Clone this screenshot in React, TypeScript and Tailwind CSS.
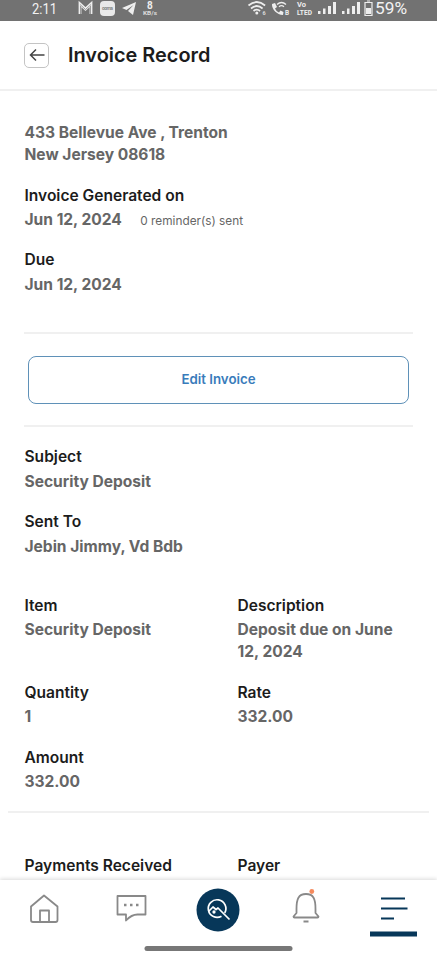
import React from 'react';

type FieldProps = {
  label: string;
  value?: React.ReactNode;
  className?: string;
};

const Field = ({ label, value, className = '' }: FieldProps) => (
  <div className={className}>
    <h2 className="text-[15.55px] leading-[22px] font-semibold text-[#1c1c1c]">{label}</h2>
    {value && (
      <div className="mt-[2.5px] text-[15.55px] leading-[22px] font-bold text-[#666666]">{value}</div>
    )}
  </div>
);

const StatusBar = () => (
  <div className="h-[21px] shrink-0 overflow-hidden bg-[#727272] text-white">
    <svg width="437" height="21" viewBox="0 0 437 21" fill="none" fontFamily="Roboto, sans-serif">
      <text x="32" y="14" fontSize="15.500" fill="#f2f2f2" textLength="25" lengthAdjust="spacingAndGlyphs">2:11</text>
      {/* Mail */}
      <path d="M80 14V4l5.500 5L91 4v10" stroke="#eee" strokeWidth="2.800" />
      <path d="M80 4.500l5.500 5 5.500-5M80.500 14V6M90.500 14V6" stroke="#777" strokeWidth=".7" />
      {/* App badge */}
      <rect x="100" y="1" width="15" height="15" rx="4" fill="#e9e9e9" />
      <text x="102" y="10" fontSize="5" fontWeight="700" fill="#888" textLength="11">ooma</text>
      {/* Telegram */}
      <path d="M136 2l-14 6 4.500 2 7-5-5.500 6 5 4z" fill="#eee" />
      <text x="147" y="8.500" fontSize="10" fontWeight="700" fill="#eee">8</text>
      <text x="143" y="15" fontSize="5.500" fontWeight="700" fill="#ddd" textLength="14" lengthAdjust="spacingAndGlyphs">KB/s</text>
      {/* Wifi */}
      <g stroke="#eee" strokeWidth="1.700">
        <path d="M248.500 5.500q8.300-7 16.600 0M251 8.500q5.800-5 11.600 0M253.500 11q3.300-2.800 6.600 0" />
      </g>
      <circle cx="256.800" cy="13" r="1.500" fill="#eee" />
      <text x="262.500" y="14.500" fontSize="5.500" fontWeight="700" fill="#ddd">6</text>
      {/* Wifi calling */}
      <path d="M272 4l3-1 2 4-2 1.500c1 2 2 3 4 4l1.500-2 3 1.500-.5 3C277 15 271.500 9 272 4z" fill="#eee" />
      <path d="M277 4.500q4.500-4 9 0M279 6.700q2.500-2 5 0" stroke="#eee" strokeWidth="1.300" />
      <text x="285" y="15" fontSize="6.500" fontWeight="700" fill="#eee">B</text>
      <text x="297" y="7" fontSize="7.500" fontWeight="700" fill="#eee" textLength="9">Vo</text>
      <text x="297" y="14.500" fontSize="7" fontWeight="700" fill="#eee" textLength="15" lengthAdjust="spacingAndGlyphs">LTED</text>
      {/* Signal */}
      <g fill="#eee">
        <path d="M318 11h2.500v3H318zM323 8.500h2.500V14H323zM328 6h3v8h-3zM333 2h3v12h-3z" />
        <path d="M342 11h2.500v3H342zM347 8.500h2.500V14H347zM352 6h3v8h-3zM357 2h3v12h-3z" />
      </g>
      {/* Battery */}
      <path d="M365 2.500h7v13h-7zM367 1h3" stroke="#eee" strokeWidth="1.200" />
      <path d="M366 8h5v6h-5z" fill="#eee" />
      <text x="375" y="14" fontSize="16" fill="#f2f2f2" textLength="32" lengthAdjust="spacingAndGlyphs">59%</text>
    </svg>
  </div>
);

const BottomNav = () => (
  <nav className="relative h-20 shrink-0 bg-white shadow-[0_-1px_4px_rgba(0,0,0,0.15)]">
    <svg width="437" height="80" viewBox="0 880 437 80" fill="none" stroke="#898989" strokeWidth="1.800" strokeLinejoin="round">
      {/* Home */}
      <path d="M31 906.500L44 895.500l13.500 11V920q0 2-2 2H33q-2 0-2-2zM40 922v-11.500h9V922" />
      {/* Messages */}
      <path d="M117.500 896h28v18.500h-8q-6 0-11.500 6v-6h-8.500z" />
      <path d="M124 905h2.500M130 905h2.500M136 905h2.500" strokeWidth="2.400" />
      {/* Search */}
      <circle cx="218" cy="910" r="21.500" fill="#073759" stroke="none" />
      <g stroke="white" strokeWidth="1.700">
        <path d="M221.500 916.200a8.800 8.800 0 1 1 3.200-3.200" />
        <path d="M208.500 911.500l4.500-4.500 3 2.500 2-1.500 11.500 11.500" />
        <circle cx="214" cy="912" r=".8" />
      </g>
      {/* Notifications */}
      <path d="M296.500 909c0-10 2-15 9.500-15s9.500 5 9.500 15v4l3 3.500q0 1-1 1h-23q-1 0-1-1l3-3.500zM303.500 921.500h5" />
      <circle cx="311.800" cy="891.500" r="2.400" fill="#f58a5d" stroke="none" />
      {/* Menu */}
      <path d="M381 898.500h24M381 908.500h26.500M381 918.500h13" stroke="#073759" strokeWidth="2.200" />
      <path d="M370 934h47" stroke="#073759" strokeWidth="5" />
      <path d="M147 948.500h143" stroke="#777" strokeWidth="5" strokeLinecap="round" />
    </svg>
  </nav>
);

const App = () => {
  return (
    <div className="flex h-[960px] w-[437px] flex-col overflow-hidden bg-white font-['Inter',sans-serif]">
      <StatusBar />
      <header className="flex h-[70px] shrink-0 items-center border-b-2 border-[#f0f0f0] px-6">
        <button aria-label="Back" className="flex size-[25px] items-center justify-center rounded-[5px] border border-[#c4c4c4]">
          <svg width="16" height="14" viewBox="0 0 16 14" fill="none" stroke="#444" strokeWidth="1.500">
            <path d="M15.500 7H1.500M7 1.500L1.500 7 7 12.500" />
          </svg>
        </button>
        <h1 className="ml-[19px] text-[19.9px] leading-7 font-semibold text-[#1c1c1c]">Invoice Record</h1>
      </header>
      <main className="min-h-0 flex-1 overflow-hidden">
        <section className="px-[24.5px] pt-[31px]">
          <p className="text-[15.55px] leading-[22px] font-bold text-[#666666]">
            433 Bellevue Ave , Trenton
            <br />
            New Jersey 08618
          </p>
          <Field
            className="mt-[18.5px]"
            label="Invoice Generated on"
            value={
              <span className="flex h-[22px] items-center">
                Jun 12, 2024
                <span className="ml-[18.5px] pt-0.5 text-[11.8px] font-normal">0 reminder(s) sent</span>
              </span>
            }
          />
          <Field className="mt-[18px]" label="Due" value="Jun 12, 2024" />
        </section>

        <section className="mx-6 mt-[36.5px] flex h-[95px] items-center border-y-2 border-[#f0f0f0] px-1">
          <button className="h-12 w-full rounded-lg border border-[#5f91b8] pt-px text-[13.3px] font-semibold text-[#397cbb]">
            Edit Invoice
          </button>
        </section>

        <section className="px-[24.5px] pt-[19px]">
          <Field label="Subject" value="Security Deposit" />
          <Field className="mt-[18.5px]" label="Sent To" value="Jebin Jimmy, Vd Bdb" />
          <div className="mt-[37px] grid grid-cols-[213px_174px] gap-y-[18.5px]">
            <Field label="Item" value="Security Deposit" />
            <Field label="Description" value="Deposit due on June 12, 2024" />
            <Field label="Quantity" value="1" />
            <Field label="Rate" value="332.00" />
            <Field label="Amount" value="332.00" />
          </div>
        </section>

        <section className="mx-2 mt-[18px] grid grid-cols-[213px_174px] border-t-2 border-[#f0f0f0] px-[16.5px] pt-[42px]">
          <Field label="Payments Received" />
          <Field label="Payer" />
        </section>
      </main>
      <BottomNav />
    </div>
  );
};

export default App;
